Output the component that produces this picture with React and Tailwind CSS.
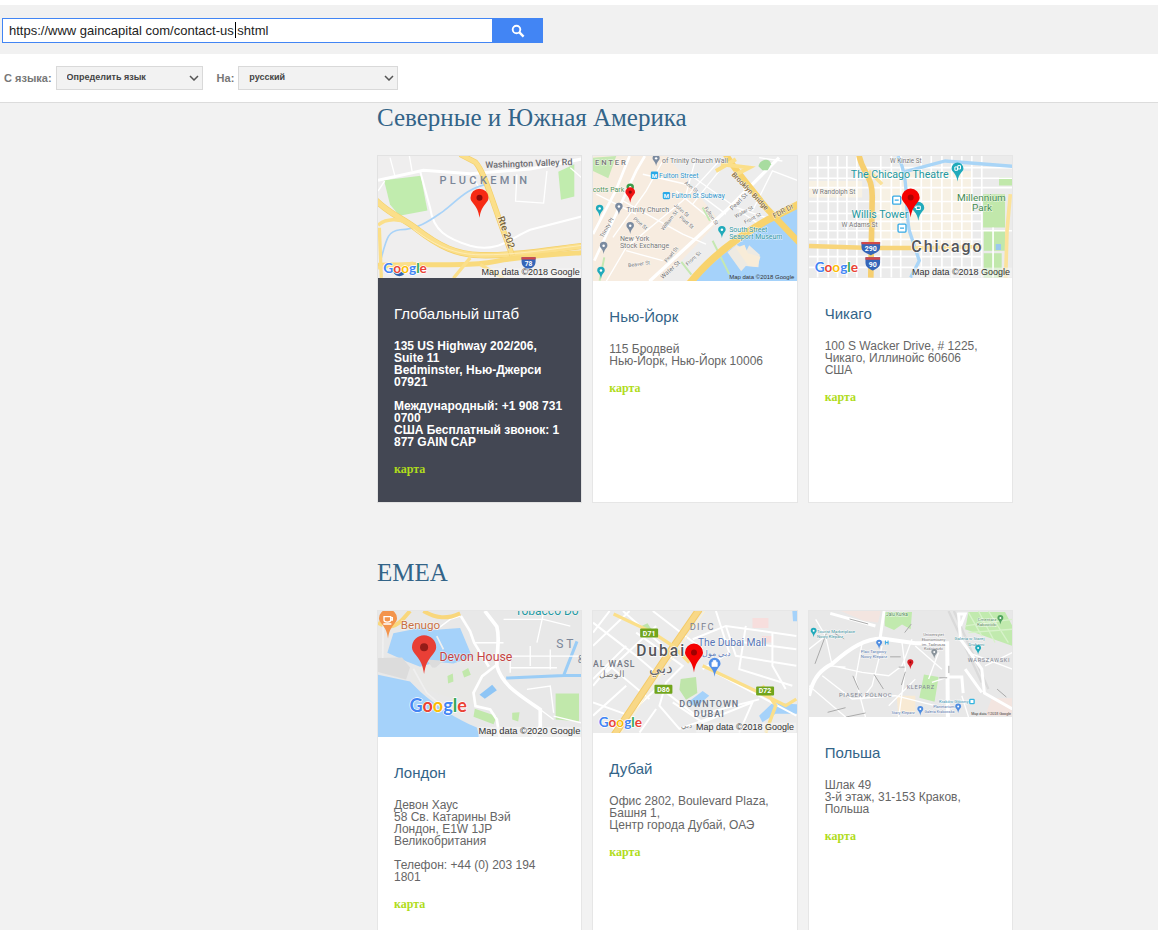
import React from "react";

const ROAD = "#ffffff";
const MAJOR = "#fbdf8a";

function Pin({ x, y, s = 1, fill = "#f01414", dot = "#8c0b0b", stroke = "none" }) {
  return (
    <g transform={`translate(${x} ${y}) scale(${s})`}>
      <path
        d="M0 0C-3-20-8-30-18-42C-24-49-27-54-27-60A27 27 0 0 1 27-60C27-54 24-49 18-42C8-30 3-20 0 0Z"
        fill={fill}
        stroke={stroke}
        strokeWidth="2"
      />
      <circle cx="0" cy="-60" r="9" fill={dot} />
    </g>
  );
}

function Poi({ x, y, fill = "#20aabb", s = 0.4 }) {
  return <Pin x={x} y={y} s={s} fill={fill} dot="#ffffff" />;
}

function Logo({ x, y, size = 41 }) {
  return (
    <text x={x} y={y} fontFamily="Lato, sans-serif" fontWeight="700" fontSize={size} stroke="#fff" strokeWidth="4" paintOrder="stroke">
      <tspan fill="#4285f4">G</tspan>
      <tspan fill="#ea4335">o</tspan>
      <tspan fill="#fbbc05">o</tspan>
      <tspan fill="#4285f4">g</tspan>
      <tspan fill="#34a853">l</tspan>
      <tspan fill="#ea4335">e</tspan>
    </text>
  );
}

function Label({ x, y, size = 22, fill = "#777", weight = 400, anchor = "start", rotate = 0, children }) {
  return (
    <text
      x={x}
      y={y}
      fontSize={size}
      fill={fill}
      fontWeight={weight}
      textAnchor={anchor}
      transform={rotate ? `rotate(${rotate} ${x} ${y})` : undefined}
      stroke="#fff"
      strokeOpacity="0.7"
      strokeWidth="3"
      paintOrder="stroke"
    >
      {children}
    </text>
  );
}

function Credit({ year = 2018, right = 628, bottom = 381, size = 27, fill = "#333" }) {
  const w = size * 10.9;
  return (
    <g>
      <rect x={right - w} y={bottom - size - 3} width={w + 6} height={size + 3} fill="#f5f5f5" fillOpacity="0.6" />
      <text x={right} y={bottom - 9} fontSize={size} fill={fill} textAnchor="end" fontFamily="Liberation Sans, sans-serif">
        Map data ©{year} Google
      </text>
    </g>
  );
}

function MapFrame({ box, label, children }) {
  return (
    <svg
      viewBox={box}
      role="img"
      aria-label={label}
      className="block h-auto w-full"
      fontFamily="Roboto, sans-serif"
      preserveAspectRatio="xMidYMid slice"
    >
      {children}
    </svg>
  );
}

function BedminsterMap() {
  return (
    <MapFrame box="24 15 609 366" label="Bedminster">
      <rect x="20" y="10" width="620" height="380" fill="#efeeee" />
      <path d="M42 88L152 74L172 178L88 194L60 160Z" fill="#c1ecae" />
      <path d="M564 62L612 40V136L572 146Z" fill="#c1ecae" />
      <g fill="none" stroke={ROAD}>
        <path d="M24 88L160 58L300 68L480 54L634 24" strokeWidth="9" />
        <path d="M150 60L180 170C190 240 230 262 300 284C380 306 420 262 480 236L634 196" strokeWidth="6" />
        <path d="M118 15L126 60M60 20L76 80M440 70L436 150L520 156L530 60M600 50L634 80" strokeWidth="4" />
        <path d="M24 120L44 90M300 68L340 130" strokeWidth="4" />
      </g>
      <path d="M34 320C50 260 54 240 90 236C150 234 190 200 220 180C260 150 290 110 352 100" fill="none" stroke="#a9d3f8" strokeWidth="5" />
      <g fill="none" strokeLinecap="butt">
        <path d="M18 148C60 190 90 196 138 232C210 288 260 310 330 312C440 314 540 296 640 284" stroke="#f3cf6a" strokeWidth="19" />
        <path d="M18 148C60 190 90 196 138 232C210 288 260 310 330 312C440 314 540 296 640 284" stroke={MAJOR} strokeWidth="15" />
        <path d="M24 342C180 336 300 350 400 326C500 312 580 308 640 304" stroke="#f9da7c" strokeWidth="15" />
        <path d="M24 222C50 200 90 204 110 214M28 230L34 380M250 381L300 320M330 340L400 381M24 350L130 336" stroke={MAJOR} strokeWidth="10" />
        <path d="M270 10L316 34C340 60 360 130 384 196C400 240 410 270 426 312" stroke="#f3cf6a" strokeWidth="17" />
        <path d="M270 10L316 34C340 60 360 130 384 196C400 240 410 270 426 312" stroke={MAJOR} strokeWidth="13" />
        <path d="M130 234C200 288 260 310 330 311C440 312 540 294 640 282" stroke="#fff2c8" strokeWidth="2" />
      </g>
      <text x="346" y="51" fontSize="27" fill="#6b6b70" fontWeight="500" transform="rotate(-2 346 51)">Washington Valley Rd</text>
      <text x="208" y="99" fontSize="33" fill="#7b8799" fontWeight="500" className="tracking-[10px]">PLUCKEMIN</text>
      <Label x={382} y={200} size={29} fill="#77643c" weight={500} rotate={70}>Rte 202</Label>
      <path d="M454 318H496V330C496 345 486 350 475 355C464 350 454 345 454 330Z" fill="#3566b8" />
      <rect x="454" y="318" width="42" height="7" fill="#d14848" />
      <text x="475" y="345" fontSize="20" fontWeight="700" textAnchor="middle" fill="#fff">78</text>
      <path d="M70 362A19 19 0 0 0 106 362Z" fill="#3264ae" />
      <Pin x={328} y={200} fill="#f62a14" />
      <Logo x={40} y={365} />
      <Credit />
    </MapFrame>
  );
}

function NewYorkMap() {
  return (
    <MapFrame box="20 15 612 377" label="New York">
      <rect x="10" y="10" width="630" height="390" fill="#f7ece0" />
      <path d="M240 10H640V200L400 290L290 400H220L400 210Z" fill="#ededed" />
      <path d="M20 20L90 15L66 82L20 60Z" fill="#c5e8b2" />
      <path d="M310 400L410 312L560 205L640 165V400Z" fill="#a5d2fa" />
      <path d="M425 305L452 282L482 300L490 284L522 312L518 350L480 346L466 362Z" fill="#eeeae2" />
      <path d="M450 292L476 282L486 308L524 318L514 348L488 346Z" fill="#f8ecd8" />
      <g fill="none" stroke={ROAD}>
        <path d="M24 330L150 60L176 15M20 250L88 120L130 15" strokeWidth="8" />
        <path d="M190 392L420 180L540 60L580 20" strokeWidth="10" />
        <path d="M60 392L120 290L290 150L400 30M110 150L290 250L360 280M170 70L300 100L420 190M230 30L180 120L80 260M120 300L230 330M270 120L380 210M30 130L150 190M310 70L450 170L540 200" strokeWidth="4" />
        <path d="M330 20L300 130M450 40L480 130M500 180L560 60L640 90M590 30L520 20M460 180L520 220M400 60L320 160" strokeWidth="4" />
      </g>
      <path d="M40 390L54 320M380 270L430 370M350 170L372 210M286 334L316 372" stroke="#c5e8b2" strokeWidth="6" fill="none" />
      <g fill="none">
        <path d="M420 10C440 50 480 90 540 170L640 275" stroke="#f8d36d" strokeWidth="19" />
        <path d="M390 60L450 25M405 40L490 50L440 76" stroke="#fbdf8a" strokeWidth="12" />
        <path d="M310 400C380 310 470 250 550 205L640 160" stroke="#f8d36d" strokeWidth="22" />
      </g>
      <path d="M518 46C520 26 552 16 556 40L546 58H530Z" fill="#a8dca0" />
      <Label x={26} y={41} size={23} weight={500}>E N T E R</Label>
      <Poi x={210} y={46} fill="#7b8ba0" />
      <Label x={228} y={36} size={21}>of Trinity Church Wall</Label>
      <g fill="#2ba9e7"><rect x="194" y="62" width="22" height="22" rx="4" /><rect x="230" y="123" width="22" height="22" rx="4" /></g>
      <text x="205" y="80" fontSize="18" fontWeight="700" fill="#fff" textAnchor="middle">M</text>
      <text x="241" y="141" fontSize="18" fontWeight="700" fill="#fff" textAnchor="middle">M</text>
      <Label x={219} y={80} size={21} fill="#2f96cd">Fulton Street</Label>
      <Label x={256} y={141} size={21} fill="#2f96cd">Fulton St Subway</Label>
      <Label x={114} y={124} size={21} fill="#55935a" anchor="end">cotts Park</Label>
      <Label x={120} y={183} size={21}>Trinity Church</Label>
      <Label x={101} y={272} size={21}>New York</Label>
      <Label x={101} y={293} size={21}>Stock Exchange</Label>
      <Label x={430} y={243} size={21} fill="#3397a5">South Street</Label>
      <Label x={430} y={264} size={21} fill="#3397a5">Seaport Museum</Label>
      <Label x={436} y={72} size={21} fill="#7d653e" weight={500} rotate={46}>Brooklyn Bridge</Label>
      <Label x={566} y={203} size={22} fill="#77643c" rotate={-28}>FDR Dr</Label>
      <Label x={230} y={386} size={19} rotate={-42}>Water St</Label>
      <Label x={440} y={180} size={19} rotate={-45}>Pearl St</Label>
      <Label x={50} y={262} size={17} rotate={-60}>Trinity Pl</Label>
      <Label x={126} y={350} size={16} rotate={-8}>Beaver St</Label>
      <Label x={232} y={240} size={16} rotate={-52}>William St</Label>
      <Label x={262} y={165} size={16} rotate={40}>John St</Label>
      <Label x={278} y={202} size={16} rotate={40}>Platt St</Label>
      <Label x={140} y={206} size={16} rotate={40}>Pine St</Label>
      <Label x={294} y={98} size={16} rotate={38}>Ann St</Label>
      <Label x={354} y={172} size={16} rotate={56}>Fulton St</Label>
      <Label x={305} y={346} size={16} rotate={-42}>Front St</Label>
      <Label x={242} y={336} size={16} rotate={-50}>Pearl St</Label>
      <Label x={450} y={202} size={16} rotate={-28}>Water St</Label>
      <Label x={478} y={220} size={16} rotate={-28}>Front St</Label>
      <Poi x={98} y={192} fill="#7b8ba0" s={0.42} />
      <Poi x={132} y={250} fill="#7b8ba0" s={0.42} />
      <Poi x={52} y={310} fill="#7b8ba0" s={0.42} />
      <Poi x={40} y={198} s={0.42} />
      <Poi x={44} y={385} s={0.42} />
      <Poi x={408} y={262} s={0.42} />
      <Poi x={132} y={134} fill="#3c9d4b" s={0.42} />
      <Pin x={132} y={156} s={0.54} />
      <text x="626" y="386" fontSize="18" fill="#333" textAnchor="end" fontFamily="Liberation Sans, sans-serif">Map data ©2018 Google</text>
    </MapFrame>
  );
}

function ChicagoMap() {
  return (
    <MapFrame box="20 15 612 366" label="Chicago">
      <rect x="10" y="10" width="630" height="380" fill="#ebebeb" />
      <path d="M220 60H510V300H330L220 280ZM20 90H180V140H20Z" fill="#f7f1e4" />
      <path d="M544 130H610V230H544ZM546 238H610V300H546ZM546 308H600V381H546ZM592 80H632V104H592Z" fill="#c1e8ab" />
      <g fill="none" stroke={ROAD} strokeWidth="5">
        <path d="M20 50H632M20 82H632M20 110H632M20 152H540M20 188H540M20 212H540M20 240H632M20 266H540M20 318H540M20 350H540" />
        <path d="M46 15V381M78 15V381M106 15V381M134 15V381M164 15V381M236 15V381M268 15V381M296 15V381M358 15V381M388 15V381M420 15V381M450 15V381M480 15V381M510 15V381M540 15V381M574 230V381" />
      </g>
      <path d="M326 381L352 330L322 240C306 160 324 90 288 15M310 62L430 30L632 46" stroke="#a9d5f7" strokeWidth="10" fill="none" />
      <path d="M582 280H598V298H582Z" fill="#9bc9ee" />
      <g fill="none">
        <path d="M170 10C180 70 214 70 210 150L206 381" stroke="#f6cf70" strokeWidth="17" />
        <path d="M20 286L210 292H330" stroke="#f8d57a" strokeWidth="14" />
        <path d="M330 292L540 288M200 60L240 100M626 130L616 240L612 381" stroke="#fbe29a" strokeWidth="11" />
      </g>
      <Label x={264} y={36} size={19}>W Kinzie St</Label>
      <Label x={30} y={130} size={20}>W Randolph St</Label>
      <Label x={118} y={228} size={20}>W Adams St</Label>
      <Label x={146} y={81} size={32} fill="#2397a0">The Chicago Theatre</Label>
      <Label x={148} y={202} size={32} fill="#2397a0">Willis Tower</Label>
      <Label x={539} y={150} size={30} fill="#458b50" anchor="middle">Millennium</Label>
      <Label x={541} y={182} size={30} fill="#458b50" anchor="middle">Park</Label>
      <text x="328" y="305" fontSize="48" fill="#54565b" stroke="#fff" strokeWidth="4" paintOrder="stroke" fontWeight="500" className="tracking-[6px]">Chicago</text>
      <g fill="#fff" stroke="#35a9e5" strokeWidth="4">
        <rect x="272" y="136" width="24" height="24" rx="3" /><rect x="288" y="220" width="24" height="24" rx="3" />
        <path d="M278 148H290M294 232H306" />
      </g>
      <g fill="#3566b8"><path d="M178 274H234V290C234 304 218 308 206 314C194 308 178 304 178 290Z" /><path d="M190 320H234V336C234 350 222 354 212 360C202 354 190 350 190 336Z" /></g>
      <path d="M178 274H234V281H178ZM190 320H234V327H190Z" fill="#d14848" />
      <text x="206" y="302" fontSize="21" fontWeight="700" textAnchor="middle" fill="#fff">290</text>
      <text x="212" y="348" fontSize="21" fontWeight="700" textAnchor="middle" fill="#fff">90</text>
      <Pin x={467} y={92} s={0.66} fill="#20aabb" dot="#20aabb" />
      <Pin x={349} y={210} s={0.66} fill="#20aabb" dot="#20aabb" />
      <path d="M459 48H467V58H459ZM468 44H476V54H468ZM343 166H355V176H343ZM343 170H339V164" fill="none" stroke="#fff" strokeWidth="3" />
      <Pin x={326} y={200} fill="#f40000" dot="#b00000" />
      <Logo x={37} y={365} />
      <Credit right={625} />
    </MapFrame>
  );
}

function LondonMap() {
  return (
    <MapFrame box="24 15 609 378" label="London">
      <rect x="20" y="10" width="620" height="390" fill="#e8e8e8" />
      <path d="M20 205L120 226L150 256C200 300 260 340 320 364L330 400H20Z" fill="#a5d2fa" />
      <path d="M70 82L160 64L186 72L270 66L306 152L250 172L200 168L150 182L110 166L52 140Z" fill="#a5d2fa" />
      <path d="M24 156L96 154L120 184L108 220L24 198ZM170 160L220 164L190 190Z" fill="#dcdcdc" />
      <path d="M120 188L170 184L300 186L360 174L320 260L330 300L200 262L126 230Z" fill="#e8e8e6" />
      <path d="M232 210L248 202L250 226L234 232ZM276 196L294 186L302 206L282 214ZM314 308L380 330L370 354L310 332ZM426 320L448 318L444 346L426 340ZM556 262H626V346L556 340Z" fill="#c1e8ab" />
      <path d="M328 266L366 236L380 252L344 278Z" fill="#8ec5f5" />
      <path d="M408 216L580 208L620 106M580 208H634" stroke="#9bcdf6" strokeWidth="9" fill="none" />
      <g fill="none" stroke={ROAD}>
        <path d="M344 15L380 62C390 100 380 120 380 180C396 236 440 262 510 310V360L490 393" strokeWidth="11" />
        <path d="M380 176L336 210L310 260L316 300L360 310L380 340L388 393M272 30L300 76L312 110L356 182" strokeWidth="8" />
        <path d="M310 110H400M420 150H634M420 185H560M480 120V180M540 130V190M420 160V200M550 320L540 240L470 250M200 70L240 40L270 30M550 330L634 350M510 310L550 340M400 40H520L600 60M520 20L500 110" strokeWidth="4" />
      </g>
      <path d="M24 50C60 70 80 60 100 38L120 15M160 15C200 38 230 40 270 22" stroke="#f9d77c" strokeWidth="12" fill="none" />
      <path d="M40 30L38 156M130 188L170 260L240 320M200 90L220 130" stroke="#f0f0f0" strokeWidth="5" fill="none" />
      <Label x={434} y={27} size={36} fill="#2397a0">Tobacco Do</Label>
      <Label x={92} y={70} size={35} fill="#c87042">Benugo</Label>
      <Label x={208} y={165} size={37} fill="#c44343">Devon House</Label>
      <text x="558" y="125" fontSize="36" fill="#7b8799">S T</text>
      <text x="622" y="172" fontSize="30" fill="#7b8799">&amp;</text>
      <Pin x={54} y={97} s={1} fill="#f3944c" dot="#f3944c" />
      <path d="M42 32H62V43C62 50 42 50 42 43ZM62 35H67V42H61M40 54H64" fill="none" stroke="#fff" strokeWidth="4" />
      <Pin x={162} y={204} s={1.34} fill="#e93f36" dot="#951c18" />
      <Logo x={118} y={318} size={54} />
      <Credit year={2020} right={630} bottom={393} size={28} />
    </MapFrame>
  );
}

function Exit({ x, y, w, children }) {
  return (
    <g>
      <rect x={x} y={y} width={w} height="27" rx="3" fill="#71a51c" />
      <text x={x + w / 2} y={y + 21} fontSize="21" fontWeight="700" fill="#fff" textAnchor="middle">{children}</text>
    </g>
  );
}

function DubaiMap() {
  return (
    <MapFrame box="20 15 612 366" label="Dubai">
      <rect x="10" y="10" width="630" height="380" fill="#ebebeb" />
      <path d="M500 36H548V66H500ZM528 90H560V110H528Z" fill="#f7dedd" />
      <path d="M284 220L330 214L334 262L300 282L280 252ZM166 60L184 52L196 70L174 76Z" fill="#bfe5aa" />
      <path d="M520 330L560 292L640 296V324H570L530 350ZM620 15H640V46H622ZM306 290L350 256L370 270L330 304Z" fill="#a5d2fa" />
      <g fill="none" stroke={ROAD} strokeWidth="6">
        <path d="M20 50L150 150L220 210M20 120L130 15M60 200L210 60M20 240L70 180L190 280M110 15L230 120M70 15L20 80M20 290L130 330M120 120L20 220M150 80L290 180L240 230L220 300L280 370L390 330" />
        <path d="M320 100L420 60L632 90M420 60L450 150L632 180M400 100L632 130M480 60L460 190L620 240M350 180L632 330M390 15L430 140L350 190M560 80V180L600 250M260 290L350 350L500 290L460 381M240 260L330 330L520 281" />
        <path d="M200 15L350 130M210 310L160 381M80 370L210 250M20 330L120 240" />
      </g>
      <g fill="none">
        <path d="M84 388L250 140L340 10" stroke="#f5cb68" strokeWidth="22" />
        <path d="M84 388L250 140L340 10" stroke="#f8d887" strokeWidth="16" />
        <path d="M82 24L200 80L260 120L310 170M350 180L520 260L600 300L632 280M530 240L570 300L540 381" stroke={MAJOR} strokeWidth="10" />
        <path d="M105 381L356 15" stroke="#fff4cf" strokeWidth="3" />
      </g>
      <Exit x={162} y={68} w={54}>D71</Exit>
      <Exit x={205} y={237} w={54}>D86</Exit>
      <Exit x={511} y={242} w={54}>D72</Exit>
      <text x="311" y="71" fontSize="28" fill="#7b8190" className="tracking-[4px]">DIFC</text>
      <Label x={336} y={121} size={31} fill="#5675b5">The Dubai Mall</Label>
      <Label x={434} y={152} size={23} fill="#6580b8" anchor="end">دبي مول</Label>
      <text x="150" y="152" fontSize="47" fill="#54565b" fontWeight="500" stroke="#fff" strokeWidth="4" paintOrder="stroke" className="tracking-[6px]">Dubai</text>
      <Label x={226} y={203} size={46} fill="#66686d" anchor="middle">دبي</Label>
      <text x="20" y="184" fontSize="26" fill="#747985" fontWeight="500" className="tracking-[3px]">AL WASL</text>
      <Label x={76} y={214} size={27} anchor="middle">الوصل</Label>
      <text x="370" y="305" fontSize="27" fill="#6c7484" fontWeight="500" textAnchor="middle" className="tracking-[3px]">DOWNTOWN</text>
      <text x="370" y="334" fontSize="27" fill="#6c7484" fontWeight="500" textAnchor="middle" className="tracking-[3px]">DUBAI</text>
      <Label x={302} y={366} size={22} anchor="middle">دبي</Label>
      <Pin x={386} y={213} s={0.66} fill="#5490e8" dot="#5490e8" />
      <path d="M378 169H394V182H378ZM382 169V164H390V169" fill="#fff" stroke="#fff" strokeWidth="2" />
      <Pin x={324} y={200} fill="#f40000" dot="#9d0000" />
      <Logo x={37} y={365} />
      <Credit right={625} />
    </MapFrame>
  );
}

function KrakowMap() {
  return (
    <MapFrame box="20 15 612 319" label="Kraków">
      <rect x="10" y="10" width="630" height="340" fill="#e8e8e8" />
      <path d="M116 15H236L228 50L184 44ZM570 278H632V330H550Z" fill="#f3e5e0" />
      <path d="M284 270H340V320H288Z" fill="#f8ead4" />
      <path d="M248 18H330L326 70L300 56L276 72L248 60ZM366 206L410 214L398 288L352 276ZM500 18H610L632 60V120L490 70Z" fill="#c1eaae" />
      <path d="M500 20L540 90M530 15L580 110M560 15L620 110M490 60L632 40M500 80L632 70" stroke="#d7f2ca" strokeWidth="4" />
      <path d="M440 15L540 230M456 15L560 250" stroke="#dadada" strokeWidth="7" />
      <g fill="none" stroke={ROAD}>
        <path d="M20 270C34 210 60 190 90 174C150 120 190 100 240 98L340 112L436 112L438 334" strokeWidth="12" />
        <path d="M246 15L234 98M84 22L220 60M470 20L476 100L540 190L548 262L632 310M468 24H490L476 60M438 214H480L484 262M490 190L540 260" strokeWidth="9" />
        <path d="M40 40L70 90L90 180L180 200L260 210L300 180L330 100M20 130L70 90M60 210L150 280L280 270L400 300M180 110L160 220L190 334M300 110L310 190L290 334M20 240L130 334M340 120L420 190M240 120L210 240L180 280M340 220L260 300M410 140L380 220M500 140L632 190M550 180L632 140M480 270L500 334M80 180L130 184M390 230L438 214" strokeWidth="4" />
      </g>
      <path d="M72 83L38 174M98 83L126 99M142 39L198 54M152 210L170 252M216 206L244 250M310 198L298 238M264 153H296M290 184H308M76 320L130 306M132 334L190 322M328 54L308 80M586 250L614 274M412 216H436M441 180V202" stroke="#aaa" strokeWidth="3" fill="none" />
      <Label x={252} y={29} size={14} fill="#508858">Jalu Kurka</Label>
      <Label x={44} y={80} size={13} fill="#3b929e">Tourist Marketplace</Label>
      <Label x={44} y={96} size={13} fill="#3b929e">Nowy Kleparz</Label>
      <Label x={176} y={141} size={13} fill="#5577ad">Plac Targowy</Label>
      <Label x={176} y={157} size={13} fill="#5577ad">Nowy Kleparz</Label>
      <Label x={395} y={91} size={12} anchor="middle">Uniwersytet</Label>
      <Label x={395} y={105} size={12} anchor="middle">Ekonomiczny</Label>
      <Label x={395} y={119} size={12} anchor="middle">im. Tadeusza</Label>
      <Label x={395} y={133} size={12} anchor="middle">Kościuszki</Label>
      <Label x={584} y={44} size={13} fill="#508858" anchor="end">Cmentarz</Label>
      <Label x={584} y={60} size={13} fill="#508858" anchor="end">Rakowicki</Label>
      <Label x={548} y={103} size={13} fill="#3b929e" anchor="end">Galeria w Starej</Label>
      <Label x={548} y={119} size={13} fill="#3b929e" anchor="end">Drukarni</Label>
      <text x="110" y="274" fontSize="18" fill="#7e8592" className="tracking-[2px]">PIASEK PÓŁNOC</text>
      <text x="314" y="250" fontSize="17" fill="#7e8592" className="tracking-[2px]">KLEPARZ</text>
      <text x="498" y="168" fontSize="17" fill="#7e8592" className="tracking-[2px]">WARSZAWSKI</text>
      <Label x={500} y={292} size={13} fill="#3696b7" anchor="end">Kraków Główny</Label>
      <Label x={268} y={324} size={12} fill="#5577ad">Stary Kleparz</Label>
      <Label x={458} y={308} size={12} fill="#5577ad" anchor="end">Planetarium</Label>
      <Label x={458} y={323} size={11} fill="#5577ad" anchor="end">Galeria Krakowska</Label>
      <rect x="504" y="281" width="13" height="13" rx="2" fill="#fff" stroke="#35b5e0" strokeWidth="4" />
      <path d="M250 104V116M258 104V116M250 110H258" stroke="#35a9e5" strokeWidth="3" />
      <Poi x={34} y={94} s={0.33} />
      <Poi x={231} y={130} s={0.33} fill="#4e8ce0" />
      <Poi x={397} y={158} s={0.33} fill="#8a949c" />
      <Poi x={596} y={56} s={0.33} fill="#52a360" />
      <Poi x={529} y={146} s={0.33} />
      <Poi x={355} y={330} s={0.33} fill="#4e8ce0" />
      <Poi x={469} y={322} s={0.33} fill="#4e8ce0" />
      <Pin x={325} y={190} s={0.34} fill="#d81c24" />
      <text x="628" y="329" fontSize="11" fill="#333" textAnchor="end" fontFamily="Liberation Sans, sans-serif">Map data ©2018 Google</text>
    </MapFrame>
  );
}

const regions = [
  {
    title: "Северные и Южная Америка",
    offices: [
      {
        name: "Глобальный штаб",
        map: BedminsterMap,
        featured: true,
        blocks: [
          ["135 US Highway 202/206, Suite 11", "Bedminster, Нью-Джерси 07921"],
          ["Международный: +1 908 731 0700", "США Бесплатный звонок: 1 877 GAIN CAP"],
        ],
      },
      { name: "Нью-Йорк", map: NewYorkMap, blocks: [["115 Бродвей", "Нью-Йорк, Нью-Йорк 10006"]] },
      { name: "Чикаго", map: ChicagoMap, blocks: [["100 S Wacker Drive, # 1225,", "Чикаго, Иллинойс 60606", "США"]] },
    ],
  },
  {
    title: "EMEA",
    offices: [
      {
        name: "Лондон",
        map: LondonMap,
        blocks: [
          ["Девон Хаус", "58 Св. Катарины Вэй", "Лондон, E1W 1JP", "Великобритания"],
          ["Телефон: +44 (0) 203 194 1801"],
        ],
      },
      { name: "Дубай", map: DubaiMap, blocks: [["Офис 2802, Boulevard Plaza, Башня 1,", "Центр города Дубай, ОАЭ"]] },
      { name: "Польша", map: KrakowMap, blocks: [["Шлак 49", "3-й этаж, 31-153 Краков, Польша"]] },
    ],
  },
];

function OfficeCard({ office }) {
  const MapView = office.map;
  return (
    <article
      className={
        office.featured
          ? "min-h-[348px] border border-[#e2e2e2] bg-[#434753] text-white"
          : "min-h-[348px] border border-[#e6e6e6] bg-white text-[#666]"
      }
    >
      <MapView />
      <div className="px-4 pt-7 pb-6">
        <h3 className={office.featured ? "text-[15px] leading-4" : "text-[15px] leading-4 text-[#336488]"}>{office.name}</h3>
        <div className={office.featured ? "mt-[18px] space-y-3 text-[12px] leading-3 font-bold" : "mt-[18px] space-y-3 text-[12px] leading-3"}>
          {office.blocks.map((lines) => (
            <p key={lines[0]}>
              {lines.map((line) => (
                <span key={line} className="block">{line}</span>
              ))}
            </p>
          ))}
        </div>
        <a href="#map" className="mt-[13px] block font-['Liberation_Serif',serif] text-[12px] leading-4 font-bold text-[#b0dc1c]">
          карта
        </a>
      </div>
    </article>
  );
}

function LanguageSelect({ id, label, value, className }) {
  return (
    <div className="flex items-center gap-1">
      <label htmlFor={id} className="text-[11px] font-bold text-[#777]">{label}</label>
      <div className={className}>
        <select
          id={id}
          className="h-6 w-full appearance-none border border-[#d9d9d9] bg-[#f2f2f2] pr-6 pl-[10px] text-[9px] font-bold text-[#444]"
        >
          <option>{value}</option>
        </select>
        <svg viewBox="0 0 10 6" className="pointer-events-none h-[6px] w-[10px]" fill="none" stroke="#555" strokeWidth="1.5">
          <path d="M1 1L5 5L9 1" />
        </svg>
      </div>
    </div>
  );
}

export default function App() {
  return (
    <div className="min-h-screen bg-[#f2f2f2] font-['Liberation_Sans',Arial,sans-serif]">
      <header>
        <form className="flex border-t-[5px] border-white bg-[#f1f1f1] pt-[13px] pb-[11px] pl-[2px]" onSubmit={(e) => e.preventDefault()}>
          <div className="relative w-[491px]">
            <input
              type="text"
              aria-label="URL"
              defaultValue="https://www gaincapital com/contact-us shtml"
              className="h-[25px] w-full border border-[#4285f4] bg-white px-[6px] text-[13px] text-[#222] outline-none"
            />
            <span className="absolute top-1 left-[233px] h-4 w-px bg-black" />
          </div>
          <button type="submit" aria-label="Поиск" className="flex h-[25px] w-[50px] items-center justify-center bg-[#4285f4]">
            <svg viewBox="0 0 14 14" className="h-[14px] w-[14px]" fill="none" stroke="#fff">
              <circle cx="5.5" cy="5.5" r="3.8" strokeWidth="1.9" />
              <path d="M8.4 8.4L12.6 12.6" strokeWidth="2.4" />
            </svg>
          </button>
        </form>
        <div className="flex h-[49px] items-center gap-[14px] border-b border-[#dcdcdc] bg-white pl-1">
          <LanguageSelect
            id="from"
            label="С языка:"
            value="Определить язык"
            className="grid w-[147px] items-center [&>*]:col-start-1 [&>*]:row-start-1 [&>svg]:mr-1 [&>svg]:justify-self-end"
          />
          <LanguageSelect
            id="to"
            label="На:"
            value="русский"
            className="grid w-[160px] items-center [&>*]:col-start-1 [&>*]:row-start-1 [&>svg]:mr-1 [&>svg]:justify-self-end"
          />
        </div>
      </header>
      <main className="space-y-[55px] pr-4 pl-[377px]">
        {regions.map((region) => (
          <section key={region.title} className="max-w-[636px]">
            <h2 className="font-['Liberation_Serif',serif] text-[25px] leading-[30px] text-[#336488]">{region.title}</h2>
            <div className="mt-[22px] grid grid-cols-3 gap-[10px]">
              {region.offices.map((office) => (
                <OfficeCard key={office.name} office={office} />
              ))}
            </div>
          </section>
        ))}
      </main>
    </div>
  );
}
